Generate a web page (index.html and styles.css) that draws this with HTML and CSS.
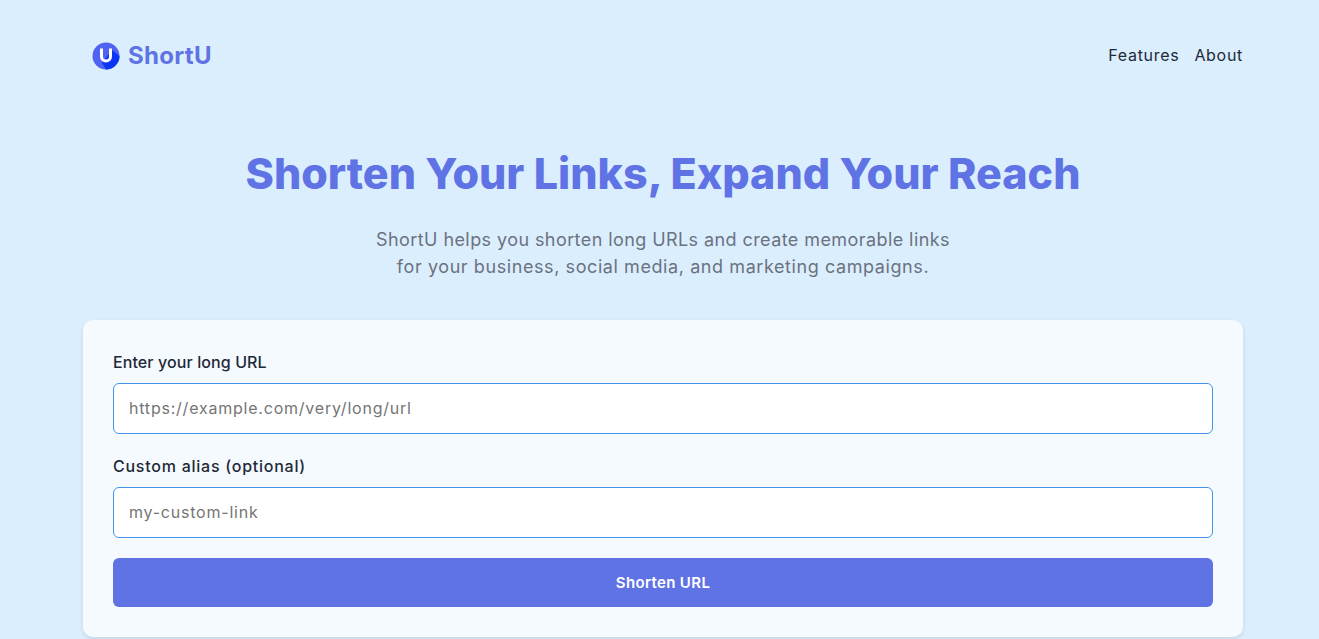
FILE: index.html
```html
<!DOCTYPE html>
<html lang="en">
<head>
    <meta charset="UTF-8">
    <meta name="viewport" content="width=device-width, initial-scale=1.0">
    <title>ShortU</title>
    <link rel="stylesheet" href="styles.css">
</head>
<body>
    <div class="container">
        <header class="navbar">
            <a class="logo" href="#">
                <svg class="logo-icon" viewBox="0 0 28 28" xmlns="http://www.w3.org/2000/svg">
                    <circle cx="14" cy="14" r="13.5" fill="#4f63f0"/>
                    <path d="M10 21L20 8 27.5 14A13.5 13.5 0 0 1 14 27.5L12 24z" fill="#0a35f5"/>
                    <path d="M9.5 6.5v8a4.5 4.5 0 0 0 9 0v-8" fill="none" stroke="#fff" stroke-width="3"/>
                </svg>
                <span>ShortU</span>
            </a>
            <nav class="nav-links">
                <a href="#">Features</a>
                <a href="#">About</a>
            </nav>
        </header>

        <section class="hero">
            <h1>Shorten Your Links, Expand Your Reach</h1>
            <p>ShortU helps you shorten long URLs and create memorable links<br><span class="hero-line">for your business, social media, and marketing campaigns.</span></p>
        </section>

        <form class="card">
            <div class="field">
                <label for="longUrl">Enter your long URL</label>
                <input id="longUrl" type="text" placeholder="https://example.com/very/long/url">
            </div>
            <div class="field field-alias">
                <label for="alias">Custom alias (optional)</label>
                <input id="alias" type="text" placeholder="my-custom-link">
            </div>
            <button type="button">Shorten URL</button>
        </form>
    </div>
</body>
</html>
```
FILE: styles.css
```css
body {
    font-family: "Inter", "Open Sans", sans-serif;
    margin: 0;
    padding: 0;
    background-color: #dbeefe;
    color: #1f2937;
    height: 639px;
    overflow: hidden;
}

.container {
    width: 1160px;
    margin: 0 0 0 83px;
}

.navbar {
    display: flex;
    justify-content: space-between;
    align-items: center;
    height: 111px;
    padding-left: 9px;
    box-sizing: border-box;
}

.logo {
    display: flex;
    align-items: center;
    gap: 8px;
    text-decoration: none;
    color: #5f73e5;
    font-size: 24px;
    font-weight: 700;
    letter-spacing: 0.3px;
}

.logo-icon {
    width: 28px;
    height: 28px;
}

.nav-links {
    display: flex;
    gap: 15px;
    margin-bottom: 2px;
}

.nav-links a {
    text-decoration: none;
    color: #1f2937;
    font-size: 16px;
    letter-spacing: 0.7px;
}

.hero {
    text-align: center;
    height: 209px;
}

.hero h1 {
    margin: 0;
    padding-top: 35px;
    font-size: 43px;
    line-height: 54px;
    font-weight: 800;
    color: #5f73e5;
}

.hero p {
    margin: 26px 0 0;
    font-size: 18px;
    line-height: 27px;
    letter-spacing: 0.42px;
    color: #6b7280;
}

.hero-line {
    letter-spacing: 0.58px;
}

.card {
    background: #f5faff;
    border-radius: 10px;
    box-shadow: 0 2px 4px rgba(0, 0, 0, 0.1);
    padding: 30px;
    height: 317px;
    box-sizing: border-box;
}

.field {
    margin-bottom: 20px;
}

.field label {
    display: block;
    font-size: 16px;
    line-height: 24px;
    letter-spacing: 0.1px;
    margin-bottom: 9px;
    font-weight: 500;
}

.field-alias label {
    letter-spacing: 0.75px;
}

.field input {
    display: block;
    width: 100%;
    height: 51px;
    box-sizing: border-box;
    padding: 0 15px 2px;
    border: 1px solid #4393ec;
    border-radius: 6px;
    background: #fff;
    font-family: inherit;
    font-size: 16px;
    letter-spacing: 0.78px;
}

.field input::placeholder {
    color: #757575;
}

button {
    display: block;
    width: 100%;
    height: 49px;
    border: 0;
    border-radius: 6px;
    background: #5f73e5;
    color: #fff;
    font-family: inherit;
    font-size: 15px;
    font-weight: 600;
    letter-spacing: 0.35px;
}
```
